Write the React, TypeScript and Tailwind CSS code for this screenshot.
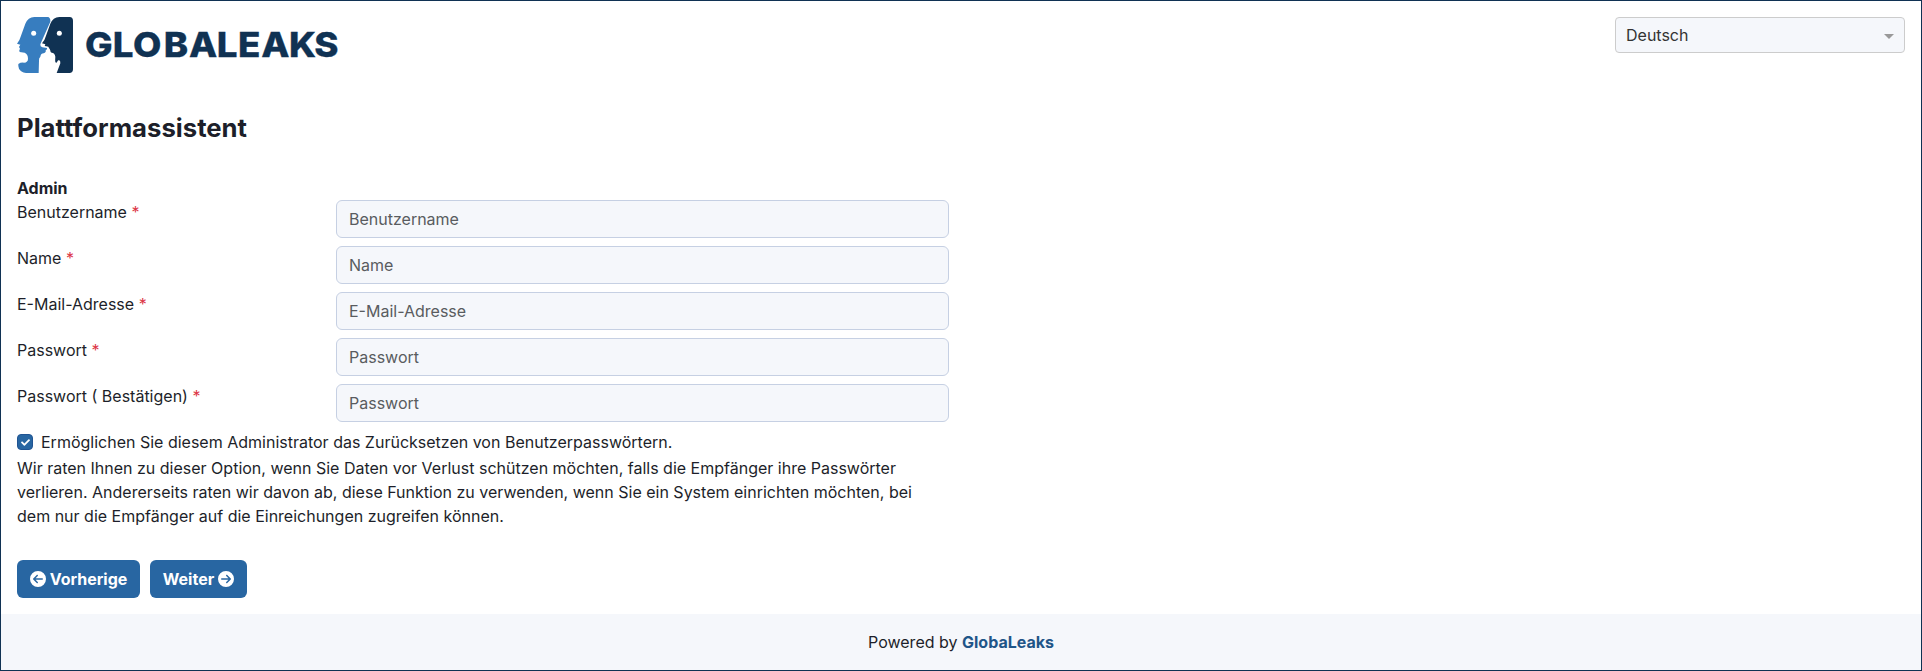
import { FaCheck } from "react-icons/fa";
import { FaCircleArrowLeft, FaCircleArrowRight } from "react-icons/fa6";

const fields = [
  { label: "Benutzername", placeholder: "Benutzername", type: "text" },
  { label: "Name", placeholder: "Name", type: "text" },
  { label: "E-Mail-Adresse", placeholder: "E-Mail-Adresse", type: "text" },
  { label: "Passwort", placeholder: "Passwort", type: "password" },
  { label: "Passwort ( Bestätigen)", placeholder: "Passwort", type: "password" },
];

function Logo() {
  return (
    <div className="flex h-14">
      <svg width="56" height="56" viewBox="51 51 168 168" aria-hidden="true">
        <path
          fill="#377dbf"
          d="M103 51H145Q152 54 151 65L121 133Q120 140 127 142L141 144Q143 148 137 151Q139 157 131 160Q123 160 121 170Q116 174 117 182L116 219H78Q62 216 57 206Q54 200 55 192Q62 187 72 188Q84 187 84 176Q84 162 74 158L59 156Q56 151 60 146L57 141L61 134L51 131Q60 119 63 107L76 71Q84 52 103 51Z"
        />
        <path
          fill="#103253"
          d="M178 51H209Q219 52 219 62V208Q219 219 208 219H170L181 190Q182 182 177 180Q173 180 170 188L166 187Q165 180 166 170Q164 158 155 158L152 156Q151 149 147 144Q147 139 139 139L134 138L136 133L126 130Q135 119 138 107L151 71Q159 52 178 51Z"
        />
        <circle cx="101" cy="100" r="7.5" fill="white" />
        <circle cx="178" cy="100" r="7.5" fill="white" />
      </svg>
      <svg width="264" height="56" viewBox="73 17 264 56" className="overflow-visible" role="img">
        <text
          transform="scale(1.07 1)"
          x="79.5 105.3 124.4 153 176.6 202.5 222.4 244.2 270 293.6"
          y="57"
          fill="#103253"
          stroke="#103253"
          strokeWidth="0.3"
          fontFamily="Inter, sans-serif"
          fontWeight="800"
          fontSize="34.3"
        >
          GLOBALEAKS
        </text>
      </svg>
    </div>
  );
}

export default function App() {
  return (
    <div className="flex h-[671px] flex-col border border-[#103253] bg-white font-['Inter',sans-serif] text-base text-[#1d1f2a]">
      <header className="flex h-[88px] shrink-0 items-start justify-between p-4">
        <Logo />
        <button className="flex h-9 w-[290px] items-center justify-between rounded border border-[#cccccc] bg-[#f5f7fb] pr-2.5 pl-2.5 text-[#333]">
          <span>Deutsch</span>
          <span className="mt-0.5 border-x-[5px] border-t-[5px] border-x-transparent border-t-[#999]" />
        </button>
      </header>

      <main className="flex grow flex-col px-4">
        <h1 className="mt-[23px] text-[25.7px] leading-[31px] font-bold">Plattformassistent</h1>
        <form className="mt-[33px] flex w-[932px] flex-col">
          <div className="leading-6 font-bold">Admin</div>
          <div className="flex flex-col gap-2">
            {fields.map((f) => (
              <label key={f.label} className="flex h-[38px] items-start">
                <span className="w-[319px] leading-6">
                  {f.label} <span className="text-[#dc3545]">*</span>
                </span>
                <input
                  type={f.type}
                  placeholder={f.placeholder}
                  className="h-[38px] w-[613px] rounded-md border border-[#c6d0e3] bg-[#f5f7fb] px-3 placeholder:text-[#595c5f]"
                />
              </label>
            ))}
          </div>
          <div className="mt-2 flex h-6 items-center gap-2">
            <span className="flex size-4 items-center justify-center rounded border border-[#205493] bg-[#2866a2] text-white">
              <FaCheck size={9} />
            </span>
            <span>Ermöglichen Sie diesem Administrator das Zurücksetzen von Benutzerpasswörtern.</span>
          </div>
          <p className="mt-0.5 w-[920px] leading-6">
            Wir raten Ihnen zu dieser Option, wenn Sie Daten vor Verlust schützen möchten, falls die Empfänger ihre
            Passwörter verlieren. Andererseits raten wir davon ab, diese Funktion zu verwenden, wenn Sie ein System
            einrichten möchten, bei dem nur die Empfänger auf die Einreichungen zugreifen können.
          </p>
          <div className="mt-8 flex gap-2.5 font-bold text-white">
            <button type="button" className="flex h-[38px] w-[123px] items-center justify-center gap-1 rounded-md bg-[#2866a2] whitespace-nowrap">
              <FaCircleArrowLeft size={16} className="shrink-0" />
              Vorherige
            </button>
            <button type="button" className="flex h-[38px] w-[97px] items-center justify-center gap-1 rounded-md bg-[#2866a2] whitespace-nowrap">
              Weiter
              <FaCircleArrowRight size={16} className="shrink-0" />
            </button>
          </div>
        </form>
      </main>

      <footer className="flex h-14 shrink-0 items-center justify-center bg-[#f5f7fb]">
        <span>
          Powered by <a className="font-bold text-[#1f5588]">GlobaLeaks</a>
        </span>
      </footer>
    </div>
  );
}
